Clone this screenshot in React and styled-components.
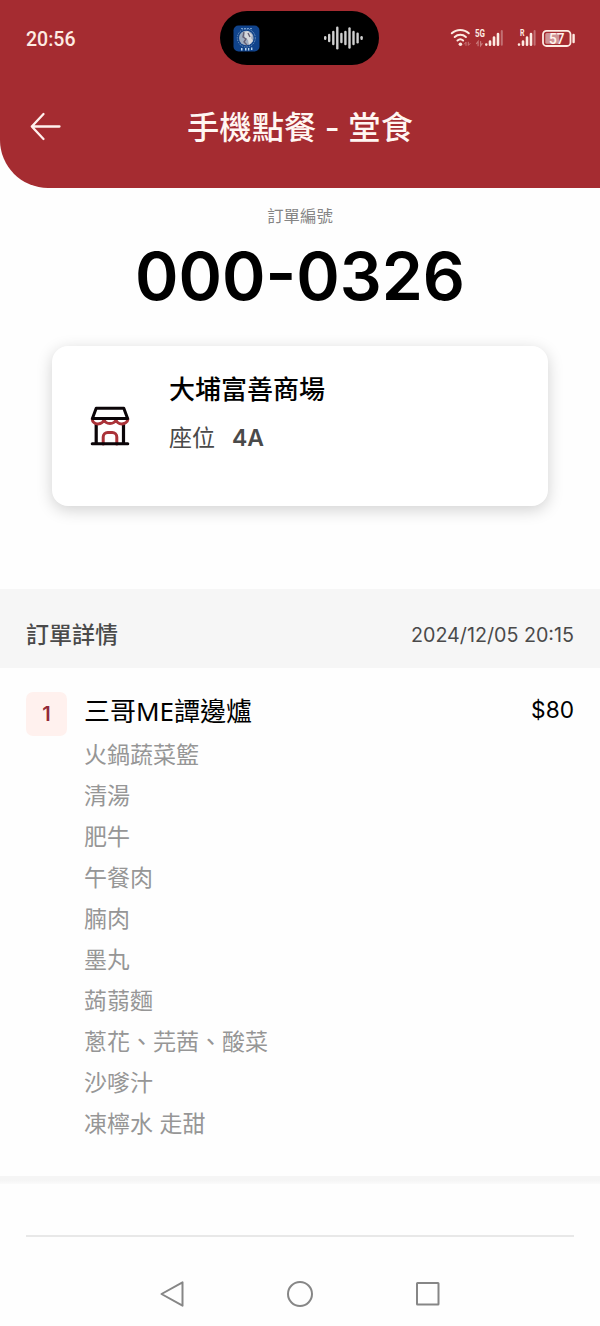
import React from 'react';
import styled, { createGlobalStyle } from 'styled-components';

const GlobalStyle = createGlobalStyle`
  * {
    box-sizing: border-box;
  }
  body {
    margin: 0;
    background: #fefefe;
    font-family: Inter, 'Noto Sans CJK TC', sans-serif;
  }
`;

const Screen = styled.div`
  display: flex;
  flex-direction: column;
  width: 600px;
  height: 1326px;
  overflow: hidden;
  background: #fefefe;
`;

const Header = styled.header`
  height: 188px;
  flex-shrink: 0;
  background: #a52c31;
  border-bottom-left-radius: 48px;
`;

const StatusBar = styled.div`
  display: grid;
  grid-template-columns: 220px 159px 1fr;
  align-items: center;
  height: 76px;
  color: #fdebe2;
`;

const Clock = styled.span`
  padding: 2px 0 0 26px;
  font-family: Roboto, sans-serif;
  font-size: 19.5px;
  font-weight: 500;
`;

const Island = styled.div`
  display: flex;
  align-items: center;
  justify-content: space-between;
  height: 54px;
  padding: 0 16px 0 13px;
  border-radius: 27px;
  background: #000;
`;

const StatusIcons = styled.div`
  display: flex;
  padding-left: 71px;
`;

const TitleBar = styled.div`
  display: grid;
  grid-template-columns: 60px 1fr 60px;
  align-items: center;
  height: 100px;
  padding: 0 30px;
`;

const BackButton = styled.button`
  display: flex;
  padding: 0;
  border: none;
  background: none;
  cursor: pointer;
`;

const Title = styled.h1`
  margin: 0;
  padding-top: 4px;
  color: #fff6f2;
  font-size: 32.3px;
  font-weight: 500;
  line-height: 48px;
  text-align: center;
  white-space: pre;
`;

const OrderNumber = styled.section`
  display: flex;
  flex-direction: column;
  align-items: center;
  height: 158px;
  padding-top: 16px;
`;

const NumberLabel = styled.span`
  color: #858585;
  font-size: 16.4px;
  line-height: 24px;
`;

const NumberValue = styled.strong`
  color: #000;
  font-size: 66px;
  font-weight: 600;
  line-height: 80px;
  margin-top: 8px;
`;

const ShopCard = styled.section`
  display: flex;
  flex-shrink: 0;
  height: 160px;
  margin: 0 52px 83px;
  border-radius: 16px;
  background: #fff;
  box-shadow: 0 4px 16px rgba(0, 0, 0, 0.18);
`;

const ShopIconBox = styled.div`
  display: flex;
  align-items: center;
  justify-content: center;
  width: 116px;
  margin-right: 1px;
`;

const ShopInfo = styled.div`
  padding-top: 24px;
`;

const ShopName = styled.h2`
  margin: 0;
  color: #000;
  font-size: 26px;
  font-weight: 500;
  line-height: 40px;
`;

const Seat = styled.div`
  display: flex;
  gap: 17px;
  margin-top: 10px;
  color: #4a4a4a;
  font-size: 23px;
  line-height: 36px;
`;

const SeatNumber = styled.span`
  font-weight: 600;
`;

const DetailBar = styled.div`
  display: flex;
  flex-shrink: 0;
  align-items: center;
  justify-content: space-between;
  height: 79px;
  padding: 12px 26px 0;
  background: #f6f6f6;
  color: #4a4a4a;
`;

const DetailTitle = styled.h3`
  margin: 0;
  font-size: 23px;
  font-weight: 500;
  line-height: 36px;
`;

const DetailDate = styled.time`
  font-size: 19.7px;
`;

const OrderItem = styled.section`
  display: flex;
  flex-shrink: 0;
  height: 508px;
  padding: 24px 26px 0;
`;

const Quantity = styled.span`
  display: flex;
  align-items: center;
  justify-content: center;
  width: 41px;
  height: 44px;
  border-radius: 7px;
  background: #fff1ee;
  color: #932a38;
  font-size: 20px;
  font-weight: 600;
`;

const ItemBody = styled.div`
  flex: 1;
  padding-left: 17px;
`;

const ItemName = styled.div`
  margin-bottom: 5px;
  color: #000;
  font-family: 'Noto Sans', 'Noto Sans CJK TC', sans-serif;
  font-size: 26px;
  line-height: 38px;
`;

const Option = styled.div`
  color: #969696;
  font-size: 23px;
  line-height: 41px;
`;

const Price = styled.span`
  color: #000;
  font-size: 22.7px;
  line-height: 36px;
`;

const Separator = styled.div`
  flex-shrink: 0;
  height: 8px;
  background: linear-gradient(#f5f5f5 50%, #fbfbfb);
`;

const Divider = styled.hr`
  width: 548px;
  height: 2px;
  margin: 51px auto 0;
  border: none;
  background: #e8e8e8;
`;

const NavBar = styled.nav`
  display: flex;
  justify-content: center;
  gap: 100px;
  padding-top: 43px;
`;

const options = [
  '火鍋蔬菜籃',
  '清湯',
  '肥牛',
  '午餐肉',
  '腩肉',
  '墨丸',
  '蒟蒻麵',
  '蔥花、芫茜、酸菜',
  '沙嗲汁',
  '凍檸水 走甜',
];

// [x, half height] of each bar of the audio wave
const waveBars = [
  [1.2, 0.8], [5.2, 3], [9.3, 6], [13.3, 10.3], [17.4, 4],
  [21.4, 6], [25.5, 9.5], [29.5, 6], [33.6, 4.2], [37.6, 0.8],
];

const AppBadge = () => (
  <svg width="27" height="27" viewBox="0 0 27 27">
    <rect x="0.5" y="0.5" width="26" height="26" rx="5" fill="#10438b" />
    <circle cx="13.3" cy="13" r="9" fill="none" stroke="#6d91bd" strokeWidth="1" strokeDasharray="1.5 1" />
    <circle cx="13.3" cy="13" r="7.3" fill="#9eacc0" />
    <path d="M11 7l4-1 4 4-1 3 2 3-4 4-1-5-3-2z" fill="#d7d8dc" />
    <path d="M11 7l-1 5 3 2-2 3 3 3M15 8l2 4" fill="none" stroke="#655f74" strokeWidth="1.4" />
    <path d="M8 24.2h1.5M12 24.2h1.5M15 24.2h1.3M18 23.8h1.4" stroke="#b8d5ef" strokeWidth="2.6" />
    <path d="M8 3.6h11" stroke="#7ea5d0" strokeWidth="1" strokeDasharray="2 1" />
  </svg>
);

const Wave = () => (
  <svg width="39" height="24" viewBox="0 0 39 24">
    {waveBars.map(([x, h]) => (
      <path key={x} d={`M${x} ${12 - h}V${12 + h}`} stroke="#d0d0d0" strokeWidth="2.4" strokeLinecap="round" />
    ))}
  </svg>
);

const SignalIcons = () => (
  <svg width="126" height="24" viewBox="450 26 126 24" fill="none" stroke="#fdebe2" strokeLinecap="round">
    <g strokeWidth="2">
      <path d="M451.8 33.3a12.3 12.3 0 0 1 17 0" />
      <path d="M454.7 37a8.3 8.3 0 0 1 11.2 0" />
      <path d="M457.5 40.5a4.2 4.2 0 0 1 5.6 0" />
    </g>
    <circle cx="460.4" cy="44.2" r="1.8" fill="#fdebe2" stroke="none" />
    <path d="M464.5 44l1.5-1.8v3.2M468.3 42.2v3.2l1.7-1.8" stroke="#c9797a" strokeWidth="1" />
    <text x="475" y="36.8" fontFamily="Roboto, sans-serif" fontSize="10" fontWeight="700" textLength="10" lengthAdjust="spacingAndGlyphs" fill="#fdebe2" stroke="none">5G</text>
    <path d="M476.5 43.5l1.6-2v4.2M480.6 41.5v4.2l1.6-2" stroke="#c9797a" strokeWidth="1.2" />
    <g strokeWidth="2.6">
      <path d="M486.3 44.5v.1M490 41.5v3.2M494 37.6v7.1M498 34v10.7" />
      <path d="M501.8 31v13.7" stroke="#c27073" strokeWidth="2" />
    </g>
    <text x="520" y="36" fontFamily="Roboto, sans-serif" fontSize="9" fontWeight="700" textLength="4.5" lengthAdjust="spacingAndGlyphs" fill="#fdebe2" stroke="none">R</text>
    <g strokeWidth="2.6">
      <path d="M519 44.5v.1M523 41.5v3.2M527 37.6v7.1M531 34v10.7" />
      <path d="M534.6 31v13.7" stroke="#c27073" strokeWidth="2" />
    </g>
    <rect x="543" y="30.8" width="27.5" height="15.2" rx="3.5" strokeWidth="1.8" />
    <rect x="545.3" y="33" width="14" height="10.8" rx="1.5" fill="#cf9495" stroke="none" />
    <path d="M573.6 35v7" strokeWidth="2.4" />
    <text x="549" y="43.7" fontFamily="Roboto, sans-serif" fontSize="15" fontWeight="500" textLength="15.5" lengthAdjust="spacingAndGlyphs" fill="#fff4ee" stroke="none">57</text>
  </svg>
);

const BackArrow = () => (
  <svg width="32" height="30" viewBox="0 0 32 30" fill="none" stroke="#fff1ee" strokeWidth="2.3" strokeLinecap="round" strokeLinejoin="round">
    <path d="M13.5 3L1.8 15.5 13.5 28M1.8 15.5H29.5" />
  </svg>
);

const ShopIcon = () => (
  <svg width="40" height="40" viewBox="0 0 40 40" fill="none" strokeLinecap="round" strokeLinejoin="round">
    <path d="M6.2 17v21M33.5 17v21" stroke="#0b0508" strokeWidth="3.2" strokeLinecap="butt" />
    <g stroke="#aa3238" strokeWidth="3">
      <path d="M2.2 13c.3 6.5 11.2 6.5 11.9 0 .3 6 11.4 6 11.9 0 .3 6.5 11.2 6.5 11.9 0" />
      <path d="M13.2 38v-7a4.5 4.5 0 0 1 4.5-4.5h4.6a4.5 4.5 0 0 1 4.5 4.5V38" />
    </g>
    <path d="M6.2 2.2h27.6l3.8 10.4H2.4zM2.2 37.8h35.6" stroke="#0b0508" strokeWidth="3" />
  </svg>
);

const NavIcon = ({ children }) => (
  <svg width="28" height="28" viewBox="0 0 28 28" fill="none" stroke="#868686" strokeWidth="2" strokeLinejoin="round">
    {children}
  </svg>
);

const App = () => (
  <Screen lang="zh-Hant">
    <GlobalStyle />
    <Header>
      <StatusBar>
        <Clock>20:56</Clock>
        <Island>
          <AppBadge />
          <Wave />
        </Island>
        <StatusIcons>
          <SignalIcons />
        </StatusIcons>
      </StatusBar>
      <TitleBar>
        <BackButton>
          <BackArrow />
        </BackButton>
        <Title>手機點餐 - 堂食</Title>
      </TitleBar>
    </Header>

    <OrderNumber>
      <NumberLabel>訂單編號</NumberLabel>
      <NumberValue>000-0326</NumberValue>
    </OrderNumber>

    <ShopCard>
      <ShopIconBox>
        <ShopIcon />
      </ShopIconBox>
      <ShopInfo>
        <ShopName>大埔富善商場</ShopName>
        <Seat>
          <span>座位</span>
          <SeatNumber>4A</SeatNumber>
        </Seat>
      </ShopInfo>
    </ShopCard>

    <DetailBar>
      <DetailTitle>訂單詳情</DetailTitle>
      <DetailDate>2024/12/05 20:15</DetailDate>
    </DetailBar>

    <OrderItem>
      <Quantity>1</Quantity>
      <ItemBody>
        <ItemName>三哥ME譚邊爐</ItemName>
        {options.map(option => (
          <Option key={option}>{option}</Option>
        ))}
      </ItemBody>
      <Price>$80</Price>
    </OrderItem>

    <Separator />
    <Divider />

    <NavBar>
      <NavIcon>
        <path d="M24.5 2.3v23.4L3.5 14z" />
      </NavIcon>
      <NavIcon>
        <circle cx="14" cy="14" r="12" />
      </NavIcon>
      <NavIcon>
        <rect x="3" y="3" width="21.5" height="21.5" rx="0.5" />
      </NavIcon>
    </NavBar>
  </Screen>
);

export default App;
